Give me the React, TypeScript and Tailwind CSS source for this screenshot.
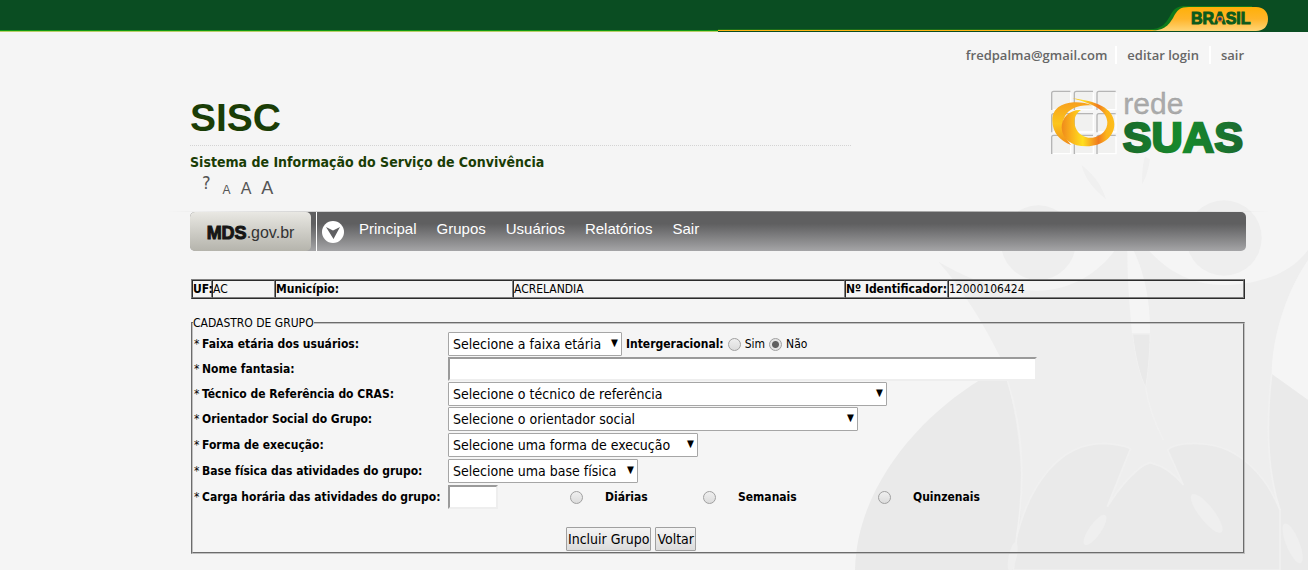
import React from "react";

const menu = ["Principal", "Grupos", "Usuários", "Relatórios", "Sair"];

function TopBar() {
  return (
    <div className="relative h-8 bg-[#0a4d22]">
      <div className="absolute bottom-0 left-0 h-0.5 w-[55%] border-b border-[#b9cf6a] bg-[#119a12]" />
      <div className="absolute bottom-0 left-[718px] right-[150px] h-[3px] border-b border-t border-b-[#0a4d22] border-t-[#1c6b1b] bg-[#fdb515]" />
      <a href="#brasil" aria-label="Brasil" className="absolute right-10 top-1">
        <svg width="120" height="28" viewBox="0 0 120 28" className="block">
          <defs>
            <linearGradient id="tab" x1="0" y1="0" x2="0" y2="1">
              <stop offset="0" stopColor="#ffb008" />
              <stop offset="0.5" stopColor="#ffb52a" />
              <stop offset="1" stopColor="#ffd576" />
            </linearGradient>
          </defs>
          <path d="M0 25.500C14 25.500 18 19 22 12C26 4 30 2 38 2H104V4H40C30 4 28 10 24 16C20 23 15 26.500 8 26.500Z" fill="#0f7a1c" />
          <path d="M0 27C16 27 20 22 25 14C29 6 32 3 41 3H108C116 3 120 8 120 15C120 22 116 27 108 27Z" fill="url(#tab)" />
          <text x="43" y="20" fontFamily="Liberation Sans, sans-serif" fontWeight="700" fontSize="16" fill="#0b5a1c" stroke="#0b5a1c" strokeWidth="1">
            BRASIL
          </text>
          <circle cx="72" cy="15" r="2.500" fill="#123a6b" stroke="#e8841a" strokeWidth="1.500" />
        </svg>
      </a>
    </div>
  );
}

function OwlBackdrop() {
  return (
    <svg aria-hidden="true" width="488" height="420" viewBox="0 0 1464 1260" className="pointer-events-none absolute right-0 top-[150px]">
      <path d="M785 45C830 80 850 120 858 148C825 120 795 90 785 45Z" fill="#f0f0f0" />
      <path d="M975 20L990 28C985 60 975 90 966 103C966 70 968 40 975 20Z" fill="#f0f0f0" />
      <path d="M355 335C440 385 530 422 650 422C770 422 850 350 885 300H985C1040 360 1110 405 1215 405C1340 402 1420 360 1464 300V1260H590C612 1050 608 800 540 620C490 520 430 420 355 335Z" fill="#eeeeee" />
      <circle cx="655" cy="278" r="112" fill="#eeeeee" />
      <circle cx="1212" cy="264" r="113" fill="#eeeeee" />
      <path d="M1464 330C1395 430 1355 570 1355 672L1464 750Z" fill="#f5f5f5" />
      <path d="M922 300C922 400 930 480 936 550H990C992 460 975 370 940 300Z" fill="#f5f5f5" />
      <path d="M938 552H990C990 620 982 680 977 712C960 680 945 620 938 552Z" fill="#e9e9e9" stroke="#f1f1f1" strokeWidth="3" />
      <path d="M480 690C300 800 110 1010 105 1260H590C612 1060 612 880 562 690Z" fill="#eaeaea" />
      <path d="M1355 672C1340 800 1340 960 1380 1080C1385 1150 1385 1210 1375 1260H1464V750Z" fill="#eaeaea" />
      <path d="M590 1160C630 1000 720 880 850 880C900 882 940 895 930 900L862 1070C900 1010 950 950 990 938C1040 950 1070 980 1090 1005L1043 900C1060 880 1120 878 1150 882C1260 890 1340 980 1380 1080V1260H580Z" fill="#eaeaea" stroke="#f0f0f0" strokeWidth="5" />
      <path d="M562 690C612 850 615 1000 590 1160M1355 672C1338 820 1340 960 1380 1080" fill="none" stroke="#f1f1f1" strokeWidth="5" />
      <path d="M977 712C985 770 1005 820 1030 870" fill="none" stroke="#f1f1f1" strokeWidth="4" />
      <g fill="#efefef">
        <ellipse cx="825" cy="1140" rx="18" ry="54" transform="rotate(35 825 1140)" />
        <ellipse cx="1160" cy="1090" rx="22" ry="72" transform="rotate(-38 1160 1090)" />
        <ellipse cx="1418" cy="1180" rx="20" ry="64" transform="rotate(-22 1418 1180)" />
        <ellipse cx="578" cy="1220" rx="12" ry="44" transform="rotate(12 578 1220)" />
      </g>
    </svg>
  );
}

function SuasLogo() {
  const columns = [38, 106, 174];
  const rows = [274, 341, 406];
  return (
    <svg role="img" aria-label="rede SUAS" width="197" height="67" viewBox="30 264 591 201" className="block shrink-0 overflow-visible">
      <defs>
        <linearGradient id="ring" x1="0" y1="0" x2="0" y2="1">
          <stop offset="0" stopColor="#f7a01e" />
          <stop offset="0.5" stopColor="#fcc61c" />
          <stop offset="1" stopColor="#f08a1a" />
        </linearGradient>
        <linearGradient id="ringInner" x1="0" y1="0.5" x2="1" y2="0.5">
          <stop offset="0" stopColor="#ef8a1c" />
          <stop offset="0.2" stopColor="#fbb51c" />
          <stop offset="0.4" stopColor="#ffdf1f" />
          <stop offset="0.7" stopColor="#f07a1f" />
          <stop offset="0.85" stopColor="#fbb41c" />
          <stop offset="1" stopColor="#fdbf1c" />
        </linearGradient>
        <linearGradient id="green" x1="0" y1="0" x2="1" y2="0">
          <stop offset="0" stopColor="#1a6a2c" />
          <stop offset="0.5" stopColor="#168a2c" />
          <stop offset="1" stopColor="#1c6a30" />
        </linearGradient>
      </defs>
      {rows.map((y) =>
        columns.map((x) => (
          <g key={`${x}-${y}`} strokeWidth="4">
            <rect x={x} y={y} width="56" height="54" rx="5" fill="#f1f1f0" />
            <path d={`M${x + 57} ${y + 4}V${y + 55}H${x + 4}`} fill="none" stroke="#ffffff" />
            <path d={`M${x} ${y + 56}V${y + 6}Q${x} ${y} ${x + 6} ${y}H${x + 56}`} fill="none" stroke="#b5b5b5" />
          </g>
        ))
      )}
      <g transform="translate(18 258)">
        <path d="M140 58C105 42 22 42 22 103C22 140 45 165 78 177C55 150 45 120 60 90C70 70 100 55 140 58Z" fill="url(#ring)" />
        <path d="M82 37C150 45 208 65 208 115C208 155 170 181 125 181C80 181 52 160 50 125C49 95 75 70 108 72C88 85 85 105 92 125C100 145 120 157 142 155C170 152 188 130 187 108C185 75 150 55 82 37Z" fill="url(#ringInner)" />
      </g>
      <text x="253" y="342" fontFamily="Liberation Sans, sans-serif" fontSize="90" fill="#ababab" stroke="#9c9c9c" strokeWidth="1">
        rede
      </text>
      <text x="251" y="456" fontFamily="Liberation Sans, sans-serif" fontWeight="700" fontSize="130" fill="url(#green)" stroke="url(#green)" strokeWidth="7">
        SUAS
      </text>
    </svg>
  );
}

function Select({ id, text, width }: { id: string; text: string; width: string }) {
  return (
    <div className={`relative h-6 ${width}`}>
      <select id={id} className="block h-6 w-full appearance-none rounded-[1px] border border-[#a6a6a6] bg-white pl-1 text-[14px] text-black outline-none">
        <option>{text}</option>
      </select>
      <span aria-hidden="true" className="pointer-events-none absolute right-1 top-1 text-[10px] leading-[14px]">
        ▼
      </span>
    </div>
  );
}

function Radio({ id, name, checked }: { id: string; name: string; checked?: boolean }) {
  return (
    <input
      id={id}
      name={name}
      type="radio"
      defaultChecked={checked}
      className="size-[13px] shrink-0 appearance-none rounded-full border border-[#a0a0a0] bg-linear-to-b from-[#efefef] to-[#dcdcdc] checked:bg-[radial-gradient(circle,#606060_0_3px,#e4e4e4_4px)]"
    />
  );
}

function Row({ id, label, height, children }: { id: string; label: string; height: string; children: React.ReactNode }) {
  return (
    <div className={`flex items-start ${height}`}>
      <label htmlFor={id} className="flex w-[254px] shrink-0 font-bold leading-6">
        <span className="w-2 font-normal">*</span>
        {label}
      </label>
      {children}
    </div>
  );
}

const inset = "border-2 border-[#eeeeee] border-l-[#9a9a9a] border-t-[#9a9a9a] bg-white outline-none";
const cell = "border border-[#808080] border-l-[#2c2c2c] border-t-[#2c2c2c] p-0 text-left leading-4";
const button = "h-6 rounded-[1px] border border-[#a0a0a0] bg-linear-to-b from-[#f4f4f4] to-[#dcdcdc] px-px text-[14px] leading-5 text-black";

export default function App() {
  return (
    <div className="relative min-h-screen overflow-hidden bg-[#f5f5f5] font-['DejaVu_Sans_Condensed','DejaVu_Sans',sans-serif] text-[12px] text-black">
      <OwlBackdrop />
      <TopBar />
      <div className="relative pl-[190px] pr-[62px]">
        <nav aria-label="Conta" className="flex items-center justify-end pr-0.5 pt-3.5 font-['Open_Sans',sans-serif] text-[13px] font-semibold leading-[18px] text-[#666666]">
          <a href="#conta">fredpalma@gmail.com</a>
          <a href="#editar" className="ml-2 border-l-2 border-white pl-2.5">editar login</a>
          <a href="#sair" className="ml-2.5 border-l-2 border-white pl-2.5">sair</a>
        </nav>

        <header className="mt-6 flex items-start justify-between">
          <div className="w-[661px]">
            <h1 className="border-b border-dotted border-[#d4d4d4] pt-0.5 font-['Liberation_Sans',sans-serif] text-[39px] font-bold leading-[55px] text-[#1a3d06]">SISC</h1>
            <p className="mt-1.5 text-[14px] font-bold leading-5 text-[#1a3d06]">Sistema de Informação do Serviço de Convivência</p>
            <div className="flex h-[39px] items-start pl-3 font-['Liberation_Sans',sans-serif] text-[#555555]">
              <button type="button" aria-label="Ajuda" className="font-['DejaVu_Sans_Condensed',sans-serif] text-[18px] leading-[22px]">?</button>
              <div className="ml-3 flex items-baseline gap-2.5 leading-8">
                <button type="button" className="text-[12px]">A</button>
                <button type="button" className="text-[16px]">A</button>
                <button type="button" className="text-[18px]">A</button>
              </div>
            </div>
          </div>
          <SuasLogo />
        </header>

        <div className="-ml-6 -mr-6 h-px bg-linear-to-r from-transparent via-[#777777] to-transparent" />
        <nav aria-label="Menu" className="flex h-[39px] items-center overflow-hidden rounded-[5px] bg-linear-to-b from-[#5f5f60] from-30% to-[#a5a5a7] font-['Liberation_Sans',sans-serif]">
          <a
            href="#mds"
            className="flex h-full w-[121px] items-center justify-center rounded-r-[5px] bg-linear-to-b from-[#e9e8e3] to-[#b5b4ac] pt-0.5 text-[16px] leading-6 text-[#333333]"
          >
            <b className="text-[18px] font-bold text-[#161616] [-webkit-text-stroke:1px_#161616]">MDS</b>
            .gov.br
          </a>
          <span className="ml-[5px] h-full w-px bg-white" />
          <svg aria-hidden="true" width="22" height="22" viewBox="0 0 22 22" className="ml-[5px]">
            <circle cx="11" cy="11" r="11" fill="#ffffff" />
            <path d="M4 6L11 9.500L18 6L11.500 18Z" fill="#606062" />
          </svg>
          <ul className="ml-[15px] flex gap-5 pb-1 text-[15px] text-white">
            {menu.map((item) => (
              <li key={item}>
                <a href={`#${item.toLowerCase()}`}>{item}</a>
              </li>
            ))}
          </ul>
        </nav>

        <main className="px-px pb-4 pt-7">
          <table className="w-full table-fixed border-separate border-spacing-0 border border-[#2c2c2c] border-l-[#808080] border-t-[#808080]">
            <colgroup>
              <col className="w-[20px]" />
              <col className="w-[63px]" />
              <col className="w-[238px]" />
              <col className="w-[332px]" />
              <col className="w-[103px]" />
              <col />
            </colgroup>
            <tbody>
              <tr>
                <th scope="row" className={cell}>UF:</th>
                <td className={cell}>AC</td>
                <th scope="row" className={cell}>Município:</th>
                <td className={cell}>ACRELANDIA</td>
                <th scope="row" className={`${cell} whitespace-nowrap`}>Nº Identificador:</th>
                <td className={cell}>12000106424</td>
              </tr>
            </tbody>
          </table>

          <form onSubmit={(e) => e.preventDefault()}>
            <fieldset className="mt-4 border-2 border-[#c0c0c0] [border-style:groove]">
              <legend className="leading-4">CADASTRO DE GRUPO</legend>
              <div className="py-px pl-px">
                <Row id="faixa" label="Faixa etária dos usuários:" height="h-[25px]">
                  <Select id="faixa" text="Selecione a faixa etária" width="w-[174px]" />
                  <div role="radiogroup" aria-labelledby="inter" className="ml-1 flex h-6 items-center">
                    <span id="inter" className="mr-1 font-bold">Intergeracional:</span>
                    <Radio id="sim" name="inter" />
                    <label htmlFor="sim" className="ml-1 mr-1">Sim</label>
                    <Radio id="nao" name="inter" checked />
                    <label htmlFor="nao" className="ml-1">Não</label>
                  </div>
                </Row>
                <Row id="nome" label="Nome fantasia:" height="h-[25px]">
                  <input id="nome" type="text" className={`h-6 w-[589px] ${inset}`} />
                </Row>
                <Row id="tecnico" label="Técnico de Referência do CRAS:" height="h-[25px]">
                  <Select id="tecnico" text="Selecione o técnico de referência" width="w-[439px]" />
                </Row>
                <Row id="orientador" label="Orientador Social do Grupo:" height="h-[26px]">
                  <Select id="orientador" text="Selecione o orientador social" width="w-[410px]" />
                </Row>
                <Row id="forma" label="Forma de execução:" height="h-[26px]">
                  <Select id="forma" text="Selecione uma forma de execução" width="w-[250px]" />
                </Row>
                <Row id="base" label="Base física das atividades do grupo:" height="h-[26px]">
                  <Select id="base" text="Selecione uma base física" width="w-[190px]" />
                </Row>
                <Row id="carga" label="Carga horária das atividades do grupo:" height="h-[26px]">
                  <input id="carga" type="text" className={`h-6 w-[50px] ${inset}`} />
                  <div className="ml-[72px] flex h-6 font-bold">
                    <div className="flex w-[133px] items-center gap-[22px]">
                      <Radio id="diarias" name="periodo" />
                      <label htmlFor="diarias">Diárias</label>
                    </div>
                    <div className="flex w-[175px] items-center gap-[22px]">
                      <Radio id="semanais" name="periodo" />
                      <label htmlFor="semanais">Semanais</label>
                    </div>
                    <div className="flex items-center gap-[22px]">
                      <Radio id="quinzenais" name="periodo" />
                      <label htmlFor="quinzenais">Quinzenais</label>
                    </div>
                  </div>
                </Row>
                <div className="flex gap-1 pl-[372px] pt-4">
                  <button type="submit" className={button}>Incluir Grupo</button>
                  <button type="button" className={button}>Voltar</button>
                </div>
              </div>
            </fieldset>
          </form>
        </main>
      </div>
    </div>
  );
}
